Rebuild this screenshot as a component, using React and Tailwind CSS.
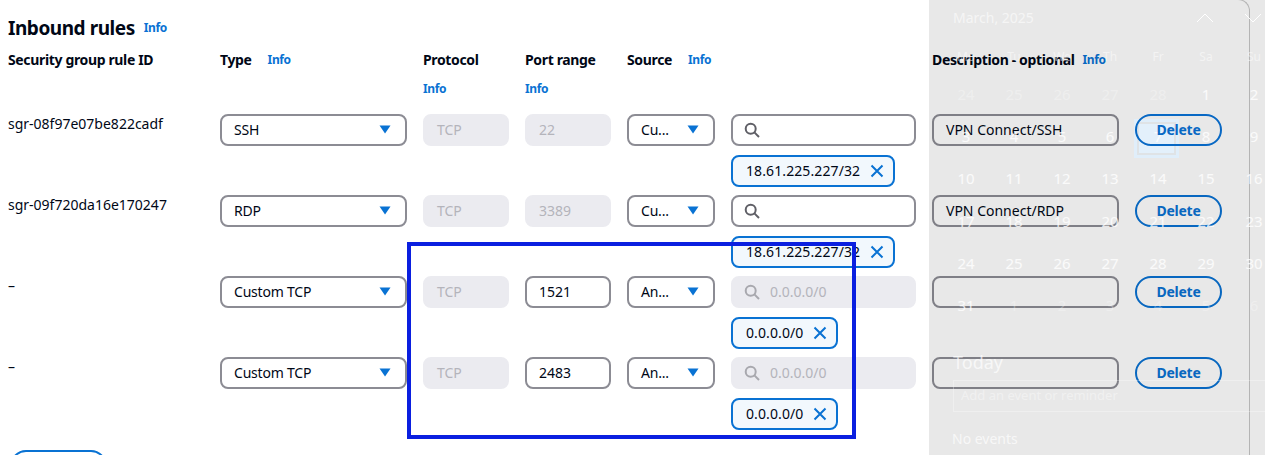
const FONT = "font-['Noto_Sans','Roboto',sans-serif]";

const ROWS = [
  { id: "sgr-08f97e07be822cadf", type: "SSH", port: "22", portOff: true, src: "Cu...", ip: "18.61.225.227/32", desc: "VPN Connect/SSH", off: false },
  { id: "sgr-09f720da16e170247", type: "RDP", port: "3389", portOff: true, src: "Cu...", ip: "18.61.225.227/32", desc: "VPN Connect/RDP", off: false },
  { id: "–", type: "Custom TCP", port: "1521", portOff: false, src: "An...", ip: "0.0.0.0/0", desc: "", off: true },
  { id: "–", type: "Custom TCP", port: "2483", portOff: false, src: "An...", ip: "0.0.0.0/0", desc: "", off: true },
];

const CAL = [
  ["24", "25", "26", "27", "28", "1", "2"],
  ["3", "4", "5", "6", "7", "8", "9"],
  ["10", "11", "12", "13", "14", "15", "16"],
  ["17", "18", "19", "20", "21", "22", "23"],
  ["24", "25", "26", "27", "28", "29", "30"],
  ["31", "1", "2", "3", "4", "5", "6"],
];

function Info({ className = "" }) {
  return <span className={`text-[12px] font-bold leading-[16px] tracking-[-0.4px] text-[#0972d3] ${className}`}>Info</span>;
}

function Caret() {
  return (
    <svg width="12" height="9" viewBox="0 0 12 9" className="shrink-0">
      <path d="M0.5 0.5h11L6 8.5z" fill="#0972d3" />
    </svg>
  );
}

function Search({ off }) {
  return (
    <svg width="16" height="16" viewBox="0 0 16 16" fill="none" stroke={off ? "#a8a8ae" : "#5f5f66"} strokeWidth="2" className="shrink-0">
      <circle cx="6.7" cy="6.7" r="5" />
      <path d="M10.4 10.4L15 15" />
    </svg>
  );
}

function Select({ label, w }) {
  return (
    <div className={`${w} flex h-[32px] items-center justify-between rounded-[8px] border-2 border-[#8c8c94] bg-white pb-[1px] pl-[12px] pr-[14px] text-[14px] tracking-[-0.2px] text-[#000716]`}>
      <span>{label}</span>
      <Caret />
    </div>
  );
}

function Field({ value, off, w }) {
  return (
    <div className={`${w} flex h-[32px] items-center rounded-[8px] border-2 pb-[1px] pl-[12px] text-[14px] ${off ? "border-[#ebebf0] bg-[#ebebf0] text-[#b4b4bb]" : "border-[#8c8c94] bg-white text-[#000716]"}`}>
      {value}
    </div>
  );
}

function Row({ r, i }) {
  return (
    <div className="flex h-[81px] items-start">
      <div className="w-[212px] pt-[2px] text-[14px] leading-[16px] text-[#000716]">{r.id}</div>
      <Select label={r.type} w="w-[187px]" />
      <div className="ml-[16px]"><Field value="TCP" off w="w-[86px]" /></div>
      <div className="ml-[16px]"><Field value={r.port} off={r.portOff} w="w-[86px]" /></div>
      <div className="ml-[16px]"><Select label={r.src} w="w-[88px]" /></div>
      <div className="ml-[16px] w-[185px]">
        <div className={`flex h-[32px] items-center gap-[10px] rounded-[8px] border-2 pb-[1px] pl-[11px] text-[14px] ${r.off ? "border-[#ebebf0] bg-[#ebebf0] text-[#b4b4bb]" : "border-[#8c8c94] bg-white"}`}>
          <Search off={r.off} />
          {r.off && <span>0.0.0.0/0</span>}
        </div>
        <div className="mt-[9px] inline-flex h-[32px] items-center gap-[10px] rounded-[8px] border-2 border-[#0972d3] bg-[#f2f8fd] pb-[1px] pl-[13px] pr-[9px] text-[14px] tracking-[0.1px] text-[#000716]">
          <span>{r.ip}</span>
          <svg width="14" height="14" viewBox="0 0 14 14" fill="none" stroke="#0972d3" strokeWidth="2" className="shrink-0">
            <path d="M1.5 1.5l11 11M12.5 1.5l-11 11" />
          </svg>
        </div>
      </div>
      <div className="ml-[16px]"><Field value={r.desc} w="w-[187px]" /></div>
      <div className={`ml-[16px] flex h-[32px] w-[87px] items-center justify-center rounded-[20px] border-2 pb-[1px] text-[14px] font-bold tracking-[-0.25px] ${i === 0 ? "relative z-20 border-[#0868c4] bg-transparent text-[#0868c4]" : "border-[#0972d3] bg-white text-[#0972d3]"}`}>Delete</div>
    </div>
  );
}

function Header() {
  return (
    <div className="flex h-[63px] items-start pl-[8px] text-[14px] font-bold leading-[20px] tracking-[-0.35px] text-[#000716]">
      <div className="w-[212px]">Security group rule ID</div>
      <div className="flex w-[203px] gap-[16px]"><span>Type</span><Info className="leading-[20px]" /></div>
      <div className="flex w-[102px] flex-col gap-[11px]"><span>Protocol</span><Info /></div>
      <div className="flex w-[102px] flex-col gap-[11px]"><span>Port range</span><Info /></div>
      <div className="flex w-[305px] gap-[16px]"><span>Source</span><Info className="leading-[20px]" /></div>
      <div className="flex gap-[8px]"><span>Description - optional</span><Info className="leading-[20px]" /></div>
    </div>
  );
}

function Calendar() {
  return (
    <div className="absolute left-[929px] top-0 z-10 h-[455px] w-[336px] bg-[#000000]/[0.09] text-white/80">
      <div className="absolute right-[15px] top-[-1px] h-[456px] w-[12px] rounded-tr-[14px] border-r border-t border-[#b4b4b4]" />
      <div className="absolute left-[24px] top-[8px] text-[14px] leading-[20px] text-white/60">March, 2025</div>
      <svg width="18" height="10" viewBox="0 0 18 10" fill="none" stroke="#fff" className="absolute left-[267px] top-[13px]"><path d="M1 9l8-8 8 8" /></svg>
      <svg width="18" height="10" viewBox="0 0 18 10" fill="none" stroke="#fff" className="absolute left-[315px] top-[13px]"><path d="M1 1l8 8 8-8" /></svg>
      <div className="absolute left-[205px] top-[119px] h-[39px] w-[45px] border-[3px] border-[#e0eefa] bg-[#e3f0fb]">
        <div className="h-full w-full border-2 border-[#dfe3e6]" />
      </div>
      <div className="absolute left-[13px] top-[47px] grid w-[336px] grid-cols-[repeat(7,48px)] text-center text-[12px] leading-[20px] text-white/50">
        {["Mo", "Tu", "We", "Th", "Fr", "Sa", "Su"].map((d) => <span key={d}>{d}</span>)}
      </div>
      <div className="absolute left-[13px] top-[84px] grid w-[336px] grid-cols-[repeat(7,48px)] grid-rows-[repeat(6,42.2px)] text-center text-[15px] leading-[20px]">
        {CAL.flat().map((d, i) => (
          <span key={i} className={i < 5 || i > 35 ? "text-white/30" : "text-white/80"}>{d}</span>
        ))}
      </div>
      <div className="absolute left-[24px] top-[350px] text-[18px] leading-[24px] text-white/70">Today</div>
      <div className="absolute left-[24px] top-[380px] flex h-[32px] w-[320px] items-center border border-white/30 pl-[7px] text-[13px] text-white/40">Add an event or reminder</div>
      <div className="absolute left-[23px] top-[429px] text-[14px] leading-[20px] text-white/70">No events</div>
    </div>
  );
}

export default function App() {
  return (
    <div className={`${FONT} relative h-[455px] w-[1265px] overflow-hidden bg-white`}>
      <div className="flex items-center gap-[9px] pl-[8px] pt-[14px]">
        <h2 className="text-[19px] font-bold leading-[28px] tracking-[-0.45px] text-[#000716]">Inbound rules</h2>
        <Info />
      </div>
      <div className="mt-[8px]"><Header /></div>
      <div className="pl-[8px] pt-[1px]">
        {ROWS.map((r, i) => <Row key={i} r={r} i={i} />)}
      </div>
      <div className="ml-[10px] mt-[12px] h-[32px] w-[97px] rounded-[20px] border-2 border-[#0972d3]" />
      <div className="absolute left-[407px] top-[242px] h-[197px] w-[449px] border-4 border-[#0a1fe0]" />
      <Calendar />
    </div>
  );
}
